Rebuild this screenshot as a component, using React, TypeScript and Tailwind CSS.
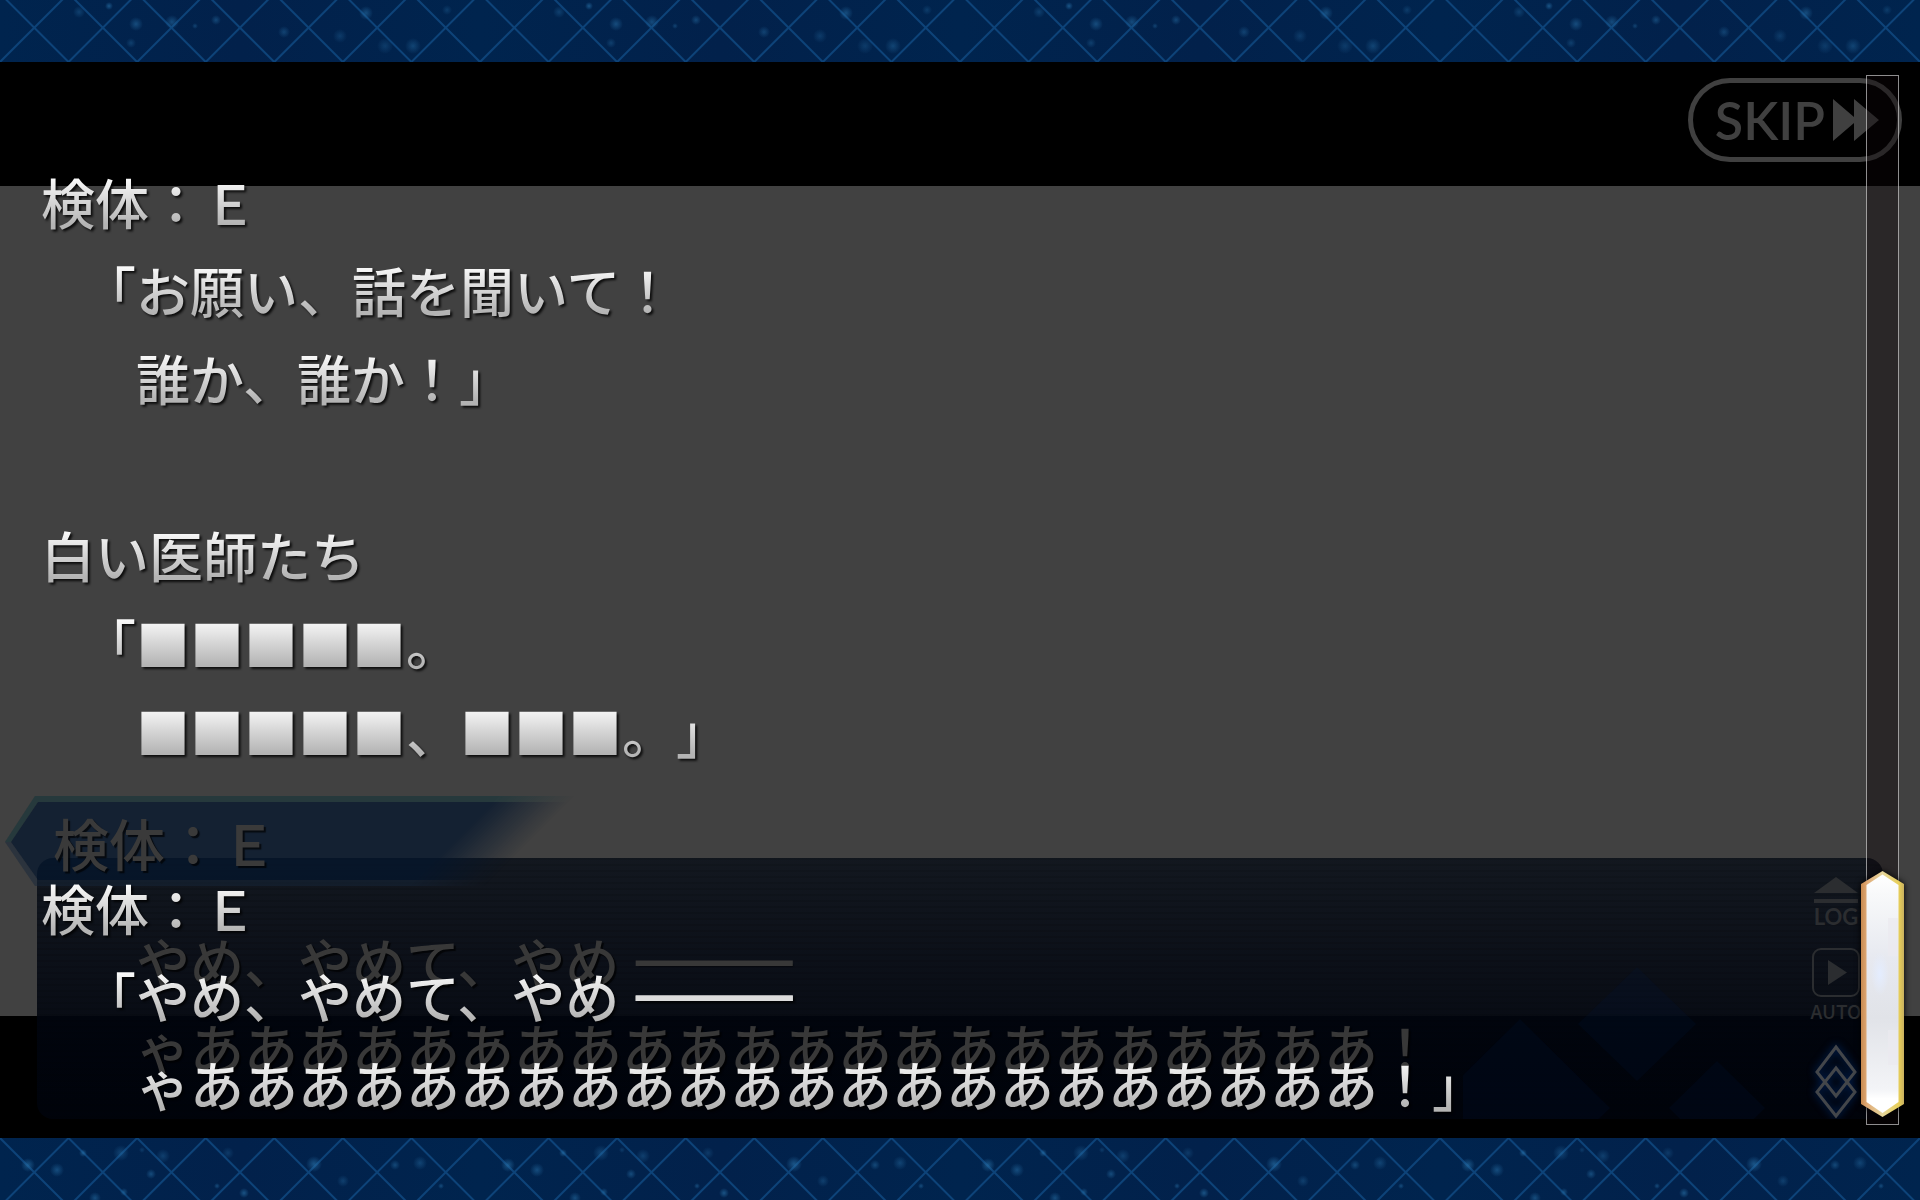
import React from 'react';
import { clsx } from 'clsx';

type Spark = { x: number; y: number; r: number; o: number };

const CELL = 480 / 7;

const TOP_SPARKS: Spark[] = [
  { x: 109, y: 6, r: 4, o: 0.6 },
  { x: 79, y: 12, r: 6, o: 0.35 },
  { x: 136, y: 24, r: 7, o: 0.5 },
  { x: 131, y: 43, r: 5, o: 0.35 },
  { x: 172, y: 22, r: 7, o: 0.5 },
  { x: 195, y: 26, r: 3, o: 0.4 },
  { x: 216, y: 20, r: 5, o: 0.45 },
  { x: 284, y: 32, r: 6, o: 0.4 },
  { x: 340, y: 36, r: 7, o: 0.3 },
  { x: 366, y: 13, r: 7, o: 0.5 },
  { x: 385, y: 46, r: 8, o: 0.3 },
  { x: 413, y: 46, r: 8, o: 0.4 },
  { x: 447, y: 10, r: 5, o: 0.3 },
];

const BOTTOM_SPARKS: Spark[] = [
  { x: 28, y: 27, r: 7, o: 0.6 },
  { x: 57, y: 32, r: 7, o: 0.5 },
  { x: 83, y: 15, r: 4, o: 0.6 },
  { x: 121, y: 15, r: 8, o: 0.4 },
  { x: 142, y: 12, r: 3, o: 0.3 },
  { x: 124, y: 54, r: 4, o: 0.5 },
  { x: 95, y: 60, r: 6, o: 0.5 },
  { x: 163, y: 18, r: 7, o: 0.35 },
  { x: 151, y: 36, r: 5, o: 0.5 },
  { x: 217, y: 48, r: 3, o: 0.5 },
  { x: 244, y: 55, r: 5, o: 0.6 },
  { x: 228, y: 15, r: 6, o: 0.3 },
  { x: 314, y: 26, r: 8, o: 0.6 },
  { x: 343, y: 43, r: 6, o: 0.35 },
  { x: 395, y: 27, r: 5, o: 0.45 },
  { x: 420, y: 25, r: 7, o: 0.4 },
  { x: 441, y: 48, r: 3, o: 0.5 },
];

// phase: y of a row of crossings
function LatticeBand({ id, phase, sparks }: { id: string; phase: number; sparks: Spark[] }) {
  const lines = Array.from({ length: 10 }, (_, i) => (i - 1) * CELL);
  return (
    <svg className="block h-[62px] w-full shrink-0" aria-hidden="true">
      <defs>
        <linearGradient id={`${id}-sky`} x1="0" y1="0" x2="1" y2="0">
          <stop offset="0" stopColor="#00244e" />
          <stop offset="0.5" stopColor="#02214b" />
          <stop offset="1" stopColor="#00244e" />
        </linearGradient>
        <radialGradient id={`${id}-glow`}>
          <stop offset="0" stopColor="#2a75ad" />
          <stop offset="1" stopColor="#2a75ad" stopOpacity="0" />
        </radialGradient>
        <pattern id={`${id}-tile`} width="480" height="62" patternUnits="userSpaceOnUse">
          <rect width="480" height="62" fill={`url(#${id}-sky)`} />
          <g strokeWidth="2" stroke="#0d4379" fill="none">
            {lines.map((x) => (
              <path
                key={x}
                d={`M${x - CELL} ${phase - CELL}L${x + CELL} ${phase + CELL}M${x + CELL} ${phase - CELL}L${x - CELL} ${phase + CELL}`}
              />
            ))}
          </g>
          {sparks.map((s) => (
            <circle key={s.x} cx={s.x} cy={s.y} r={s.r} fill={`url(#${id}-glow)`} opacity={s.o} />
          ))}
        </pattern>
      </defs>
      <rect width="100%" height="62" fill={`url(#${id}-tile)`} />
    </svg>
  );
}

function Dash({ className }: { className?: string }) {
  return <span className={clsx('ml-[14px]', className)}>―――</span>;
}

const LOG = [
  { name: '検体：Ｅ', lines: [{ text: '「お願い、話を聞いて！' }, { text: '誰か、誰か！」', indent: true }] },
  { name: '白い医師たち', lines: [{ text: '「■■■■■。' }, { text: '■■■■■、■■■。」', indent: true }] },
  {
    name: '検体：Ｅ',
    lines: [
      { text: '「やめ、やめて、やめ', dash: true },
      { text: 'ゃああああああああああああああああああああああ！」', indent: true },
    ],
  },
] as { name: string; lines: { text: string; indent?: boolean; dash?: boolean }[] }[];

const logText =
  'block w-max bg-linear-to-b from-white from-20% to-[#b4b4b4] to-75% bg-clip-text text-transparent drop-shadow-[2px_2px_1px_rgba(0,0,0,0.8)]';

function LogList() {
  return (
    <section
      aria-label="LOG"
      className="flex min-w-0 flex-1 flex-col gap-[89px] pt-[96px] pl-[41px] text-[54px] leading-[88px] font-medium whitespace-nowrap [text-spacing-trim:space-all]"
    >
      {LOG.map((entry, i) => (
        <article key={i}>
          <h2 className={logText}>{entry.name}</h2>
          {entry.lines.map((line) => (
            <p key={line.text} className={clsx(logText, line.indent ? 'ml-[95px]' : 'ml-[41px]')}>
              {line.text}
              {line.dash && <Dash className="[-webkit-text-stroke:3px_#dcdcdc]" />}
            </p>
          ))}
        </article>
      ))}
    </section>
  );
}

function Scrollbar() {
  return (
    <div
      role="scrollbar"
      aria-orientation="vertical"
      aria-valuenow={100}
      aria-controls="log"
      className="my-[13px] mr-[21px] flex w-[33px] shrink-0 flex-col items-center justify-end border border-white/55 bg-[#0c0508]/42 pb-[6px]"
    >
      <svg className="h-[248px] w-[45px] shrink-0 drop-shadow-[0_0_3px_#000]" viewBox="0 0 45 248" aria-hidden="true">
        <defs>
          <linearGradient id="thumb-edge">
            <stop offset="0" stopColor="#c88a50" />
            <stop offset="0.15" stopColor="#e0ab78" />
            <stop offset="0.5" stopColor="#e6d69c" />
            <stop offset="0.88" stopColor="#e8cf58" />
            <stop offset="1" stopColor="#c8b060" />
          </linearGradient>
          <linearGradient id="thumb-face" x1="0" y1="0" x2="0" y2="1">
            <stop offset="0" stopColor="#ffffff" />
            <stop offset="0.08" stopColor="#f8f9fa" />
            <stop offset="0.35" stopColor="#e7e9f0" />
            <stop offset="0.6" stopColor="#e1e3e8" />
            <stop offset="0.9" stopColor="#f3f4f7" />
            <stop offset="0.94" stopColor="#ffffff" />
          </linearGradient>
          <radialGradient id="thumb-sheen">
            <stop offset="0" stopColor="#e4edff" />
            <stop offset="1" stopColor="#e4edff" stopOpacity="0" />
          </radialGradient>
        </defs>
        <path d="M22.500 1L44 14V234L22.500 247L1 234V14Z" fill="url(#thumb-edge)" />
        <path d="M22.500 4.500L38.500 15V232L22.500 243L6.500 232V15Z" fill="url(#thumb-face)" />
        <ellipse cx="20" cy="104" rx="9" ry="22" fill="url(#thumb-sheen)" />
        <path d="M28 48H38V86H28ZM28 160H38V195H28Z" fill="#ebe9f0" fillOpacity="0.7" />
      </svg>
    </div>
  );
}

function NamePlate({ name }: { name: string }) {
  return (
    <div className="relative ml-[5px] -mb-[28px] grid h-[90px] w-[580px]">
      <svg className="col-start-1 row-start-1 h-[90px] w-[580px]" viewBox="0 0 580 90" aria-hidden="true">
        <defs>
          <linearGradient id="plate-fade" gradientUnits="userSpaceOnUse" x1="247" y1="247" x2="285" y2="285">
            <stop offset="0" stopColor="#fff" />
            <stop offset="1" stopColor="#fff" stopOpacity="0" />
          </linearGradient>
          <mask id="plate-mask">
            <rect width="580" height="90" fill="url(#plate-fade)" />
          </mask>
        </defs>
        <g mask="url(#plate-mask)">
          <path d="M30 0H580V6H33L6 46L33 84H580V90H30L0 46Z" fill="#15263a" fillOpacity="0.5" />
          <path d="M30 0H580V6H33L6 46H0Z" fill="#1d4a3c" fillOpacity="0.3" />
          <path d="M33 6H580V84H33L6 46Z" fill="#04152c" fillOpacity="0.74" />
        </g>
      </svg>
      <h1 className="col-start-1 row-start-1 pt-[2px] pl-[48px] text-[56px] leading-[88px] font-medium text-[#3a3a3a] text-shadow-[2px_2px_1px_rgba(0,0,0,0.7)]">
        {name}
      </h1>
    </div>
  );
}

function DialogueBox() {
  return (
    <div className="mx-[37px] grid overflow-hidden rounded-2xl bg-linear-to-b from-[#060c16]/78 to-[#00030b]/95">
      <svg className="col-start-1 row-start-1 h-full w-full" aria-hidden="true">
        <defs>
          <pattern id="scan" width="8" height="6" patternUnits="userSpaceOnUse">
            <rect width="8" height="2" fill="#000" fillOpacity="0.1" />
          </pattern>
        </defs>
        <rect width="100%" height="100%" fill="url(#scan)" />
      </svg>
      <svg className="col-start-1 row-start-1 h-[261px] w-[420px] justify-self-end" viewBox="0 0 420 261" aria-hidden="true">
        <g fill="#00143c" fillOpacity="0.18">
          <path d="M174 109L233 166L174 223L115 166Z" />
          <path d="M57 161L147 250L57 339L-33 250Z" />
          <path d="M254 203L302 250L254 297L206 250Z" />
        </g>
      </svg>
      <div className="col-start-1 row-start-1 flex justify-between">
        <p className="pt-[60px] pb-[29px] pl-[99px] text-[54px] leading-[86px] font-medium whitespace-nowrap text-[#383838] text-shadow-[2px_2px_1px_rgba(0,0,0,0.7)]">
          やめ、やめて、やめ
          <Dash className="[-webkit-text-stroke:3px_#383838]" />
          <br />
          ゃああああああああああああああああああああああ！
        </p>
        <div className="mr-[23px] flex w-[48px] flex-col items-center pt-[19px] font-[Lato] text-[#2b2d30]">
          <button type="button" className="flex flex-col items-center">
            <svg className="h-[27px] w-[46px]" viewBox="0 0 46 27" fill="currentColor" aria-hidden="true">
              <path d="M23 0L45 16H1ZM1 22H45V26H1Z" />
            </svg>
            <span className="text-[22px] leading-[26px] font-bold">LOG</span>
          </button>
          <button type="button" className="mt-[18px] flex flex-col items-center">
            <svg className="h-[49px] w-[48px]" viewBox="0 0 48 49" aria-hidden="true">
              <rect x="1" y="1" width="46" height="47" rx="8" fill="none" stroke="currentColor" strokeWidth="2" />
              <path d="M16 12L35 24.500L16 37Z" fill="currentColor" />
            </svg>
            <span className="font-['Noto_Sans_CJK_JP'] text-[19px] leading-[28px] font-medium">AUTO</span>
          </button>
          <svg className="mt-[18px] h-[76px] w-[48px] overflow-visible drop-shadow-[0_0_4px_#002a6c]" viewBox="0 0 48 76" aria-hidden="true">
            <g fill="none" stroke="#43464a" strokeWidth="3">
              <path d="M24 4L43 29L24 53L5 29Z" />
              <path d="M24 25L43 49L24 73L5 49Z" />
            </g>
          </svg>
        </div>
      </div>
    </div>
  );
}

function SkipButton() {
  return (
    <button
      type="button"
      className="mt-[16px] mr-[18px] flex h-[84px] w-[214px] items-center justify-end gap-[8px] self-end rounded-full border-[5px] border-[#404040] pr-[18px] text-[#404040]"
    >
      <span className="font-[Lato] text-[52px] leading-[72px] font-semibold">SKIP</span>
      <svg className="h-[42px] w-[46px]" viewBox="0 0 46 42" fill="currentColor" aria-hidden="true">
        <path d="M0 0L21 18V0L46 21L21 42V24L0 42Z" />
      </svg>
    </button>
  );
}

export default function App() {
  return (
    <div className="flex min-h-screen flex-col overflow-hidden bg-black font-['Noto_Sans_CJK_JP',sans-serif]">
      <LatticeBand id="top" phase={62} sparks={TOP_SPARKS} />
      <main className="grid flex-1">
        <div className="col-start-1 row-start-1 flex flex-col pt-[124px] pb-[122px]">
          <div className="flex-1 bg-[#414141]" />
        </div>
        <div className="col-start-1 row-start-1 flex min-w-0 flex-col justify-between pb-[19px]">
          <SkipButton />
          <div>
            <NamePlate name="検体：Ｅ" />
            <DialogueBox />
          </div>
        </div>
        <div id="log" className="relative col-start-1 row-start-1 flex min-w-0">
          <LogList />
          <Scrollbar />
        </div>
      </main>
      <LatticeBand id="bottom" phase={0} sparks={BOTTOM_SPARKS} />
    </div>
  );
}
